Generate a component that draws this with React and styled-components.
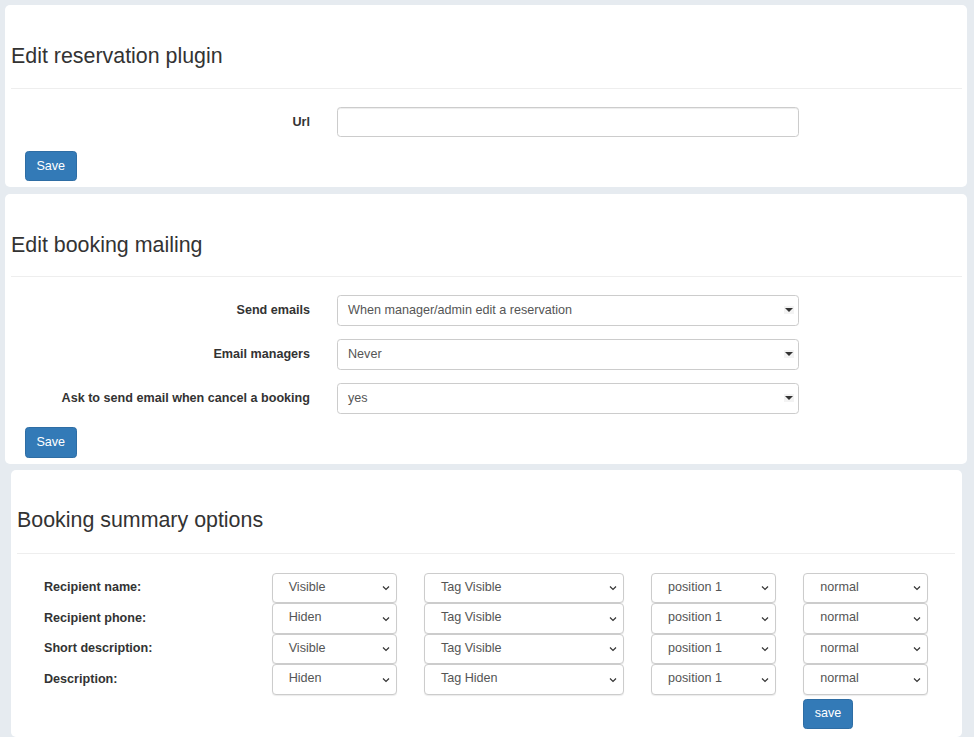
import React from "react";
import styled, { createGlobalStyle } from "styled-components";

const GlobalStyle = createGlobalStyle`
  html, body {
    margin: 0;
    padding: 0;
    background: #e6ebf0;
    overflow: hidden;
    font-family: "Liberation Sans", Arial, sans-serif;
    font-size: 12.6px;
    color: #333;
  }
  * { box-sizing: border-box; }
`;

const Page = styled.div`
  display: flex;
  flex-direction: column;
  padding: 5px 7px 0 5px;
  height: 737px;
`;

const Panel = styled.div`
  background: #fff;
  border-radius: 5px;
  padding-bottom: ${(p) => p.$bottom || "5px"};
  margin: ${(p) => p.$margin || "0"};
  flex: ${(p) => (p.$grow ? "1" : "none")};
`;

const PanelHead = styled.div`
  padding: 39.6px ${(p) => p.$right || "5px"} 0 6px;
`;

const Title = styled.h3`
  margin: 0;
  font-size: 21.4px;
  font-weight: 500;
  line-height: 1.1;
  color: #333;
`;

const Rule = styled.hr`
  margin: ${(p) => p.$top || "19.6px"} 0 0;
  border: 0;
  border-top: 1px solid #eee;
`;

const Form = styled.div`
  padding-top: ${(p) => p.$top || "18px"};
`;

const FormRow = styled.div`
  display: grid;
  grid-template-columns: 305px 462px;
  column-gap: 27px;
  align-items: center;
  margin-bottom: 13.4px;
`;

const Label = styled.label`
  text-align: right;
  font-weight: bold;
  color: #333;
  padding-bottom: 1px;
`;

const TextInput = styled.input`
  height: 30.6px;
  width: 100%;
  border: 1px solid #ccc;
  border-radius: 3.6px;
  box-shadow: inset 0 1px 1px rgba(0, 0, 0, 0.075);
  font: inherit;
  padding: 0 10px;
`;

const Select = styled.div`
  height: 30.6px;
  display: flex;
  align-items: center;
  justify-content: space-between;
  border: 1px solid #ccc;
  border-radius: 3.6px;
  padding: 0 4px 1px 10px;
  color: #555;
  background: #fff;
`;

const Caret = styled.span`
  width: 10px;
  height: 8px;
  background: #f3f3f3;
  display: flex;
  align-items: center;
  justify-content: center;

  &::after {
    content: "";
    border-left: 4px solid transparent;
    border-right: 4px solid transparent;
    border-top: 4px solid #333;
  }
`;

const Button = styled.button`
  height: 30.6px;
  padding: 0 10.4px 1px;
  background: #337ab7;
  border: 0.9px solid #2e6da4;
  border-radius: 3.6px;
  color: #fff;
  font: inherit;
  margin-left: ${(p) => p.$left || "0"};
`;

const SummaryGrid = styled.div`
  display: grid;
  grid-template-columns: 200.5px 125px 200px 125px 125px;
  column-gap: 27.2px;
  align-items: center;
  padding: 19px 0 0 33px;
`;

const RowLabel = styled.div`
  font-weight: bold;
  color: #333;
  padding-bottom: 1px;
`;

const NativeSelect = styled.div`
  height: 30.5px;
  display: flex;
  align-items: center;
  justify-content: space-between;
  padding: 0 6px 2px 16px;
  border: 1px solid #ccc;
  border-radius: 4px;
  box-shadow: 0 1px 1px rgba(0, 0, 0, 0.08);
  color: #555;
  background: #fff;

  svg {
    margin-top: 3px;
  }
`;

const SaveCell = styled.div`
  grid-column: 5;
  padding-top: 4.6px;
`;

const SmallButton = styled(Button)`
  height: 29.6px;
`;

const Chevron = () => (
  <svg width="8" height="6" viewBox="0 0 8 6">
    <path d="M1 1.5 L4 4.5 L7 1.5" fill="none" stroke="#333" strokeWidth="1.2" />
  </svg>
);

const mailing = [
  { label: "Send emails", value: "When manager/admin edit a reservation" },
  { label: "Email managers", value: "Never" },
  { label: "Ask to send email when cancel a booking", value: "yes" },
];

const summary = [
  { label: "Recipient name:", vis: "Visible", tag: "Tag Visible" },
  { label: "Recipient phone:", vis: "Hiden", tag: "Tag Visible" },
  { label: "Short description:", vis: "Visible", tag: "Tag Visible" },
  { label: "Description:", vis: "Hiden", tag: "Tag Hiden" },
];

export default function App() {
  return (
    <Page>
      <GlobalStyle />
      <Panel $margin="0 0 7.5px 0" $bottom="5.5px">
        <PanelHead>
          <Title>Edit reservation plugin</Title>
          <Rule />
        </PanelHead>
        <Form>
          <FormRow>
            <Label>Url</Label>
            <TextInput type="text" />
          </FormRow>
          <Button $left="20px">Save</Button>
        </Form>
      </Panel>

      <Panel $margin="0 0 5.5px 0" $bottom="6.5px">
        <PanelHead>
          <Title>Edit booking mailing</Title>
          <Rule $top="18.8px" />
        </PanelHead>
        <Form>
          {mailing.map((m) => (
            <FormRow key={m.label}>
              <Label>{m.label}</Label>
              <Select>
                <span>{m.value}</span>
                <Caret />
              </Select>
            </FormRow>
          ))}
          <Button $left="20px">Save</Button>
        </Form>
      </Panel>

      <Panel $margin="0 5px 0 6px" $grow>
        <PanelHead $right="7px">
          <Title>Booking summary options</Title>
          <Rule />
        </PanelHead>
        <SummaryGrid>
          {summary.map((r) => (
            <React.Fragment key={r.label}>
              <RowLabel>{r.label}</RowLabel>
              <NativeSelect>
                <span>{r.vis}</span>
                <Chevron />
              </NativeSelect>
              <NativeSelect>
                <span>{r.tag}</span>
                <Chevron />
              </NativeSelect>
              <NativeSelect>
                <span>position 1</span>
                <Chevron />
              </NativeSelect>
              <NativeSelect>
                <span>normal</span>
                <Chevron />
              </NativeSelect>
            </React.Fragment>
          ))}
          <SaveCell>
            <SmallButton>save</SmallButton>
          </SaveCell>
        </SummaryGrid>
      </Panel>
    </Page>
  );
}
